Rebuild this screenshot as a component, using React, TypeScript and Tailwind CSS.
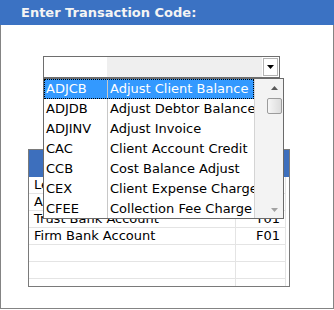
const codes = [
  { code: 'ADJCB', name: 'Adjust Client Balance' },
  { code: 'ADJDB', name: 'Adjust Debtor Balance' },
  { code: 'ADJINV', name: 'Adjust Invoice' },
  { code: 'CAC', name: 'Client Account Credit' },
  { code: 'CCB', name: 'Cost Balance Adjust' },
  { code: 'CEX', name: 'Client Expense Charge' },
  { code: 'CFEE', name: 'Collection Fee Charge' },
];

const accounts = [
  { name: 'Ledger Account', code: 'L01' },
  { name: 'Agency Account', code: 'A01' },
  { name: 'Trust Bank Account', code: 'T01' },
  { name: 'Firm Bank Account', code: 'F01' },
  { name: '', code: '' },
  { name: '', code: '' },
];

function Arrow({ up, color }: { up?: boolean; color: string }) {
  return (
    <svg width="7" height="4" viewBox="0 0 7 4">
      <path d={up ? 'M0 4 L3.5 0 L7 4 Z' : 'M0 0 L7 0 L3.5 4 Z'} fill={color} />
    </svg>
  );
}

function CodeList() {
  return (
    <div className="absolute left-0 top-[22px] z-10 flex h-[141px] w-[241px] border border-[#6a6a6a] bg-white">
      <div className="w-[210px] overflow-hidden">
        {codes.map((c, i) => (
          <div
            key={c.code}
            className={
              i === 0
                ? 'flex h-[20px] items-center bg-[#3399ff] text-white outline outline-1 -outline-offset-1 outline-dotted outline-black'
                : 'flex h-[20px] items-center text-black'
            }
          >
            <div className="flex h-full w-[64px] shrink-0 items-center border-r border-[#c8c8c8] pl-[2px]">{c.code}</div>
            <div className="whitespace-nowrap pl-[2px]">{c.name}</div>
          </div>
        ))}
      </div>
      <div className="flex flex-1 flex-col items-end border-l border-[#d4d4d4] bg-[#f3f3f3]">
        <div className="flex w-[17px] flex-1 flex-col items-center">
          <div className="flex h-[17px] w-full items-center justify-center">
            <Arrow up color="#5a5a5a" />
          </div>
          <div className="mt-[2px] h-[16px] w-[15px] rounded-[2px] border border-[#9c9c9c] bg-gradient-to-r from-[#f6f6f6] to-[#dcdcdc]" />
          <div className="flex-1" />
          <div className="flex h-[17px] w-full items-center justify-center">
            <Arrow color="#a2a2a2" />
          </div>
        </div>
      </div>
    </div>
  );
}

export default function App() {
  return (
    <div className="h-[310px] w-[334px] overflow-hidden bg-white text-[13px] text-black" style={{ fontFamily: '"DejaVu Sans", Verdana, sans-serif' }}>
      <div className="flex h-[25px] items-center bg-[#3b72c3] pl-[21px] text-[13px] font-bold text-[#f4f4f4]">
        Enter Transaction Code:
      </div>
      <div className="h-[284px] border-x border-b border-[#848484] pt-[31px]">
        <div className="relative ml-[42px] w-[237px]">
          <div className="flex h-[22px] border border-[#6e6e6e] bg-white">
            <div className="w-[63px] bg-white" />
            <div className="flex-1 bg-[#efefef]" />
            <div className="m-[1px] flex w-[15px] items-center justify-center border border-[#b4b4b4] bg-white">
              <Arrow color="#000" />
            </div>
          </div>
          <CodeList />
        </div>

        <div className="ml-[27px] mt-[71px] h-[138px] w-[262px] overflow-hidden border border-[#7a7a7a] bg-white">
          <div className="h-[27px] bg-[#3d6fbd]" />
          {accounts.map((a, i) => (
            <div key={i} className="flex h-[17px] w-[257px] border-b border-[#e4e4e4]">
              <div className="flex w-[207px] items-center whitespace-nowrap border-r border-[#e4e4e4] pl-[5px]">{a.name}</div>
              <div className="flex flex-1 items-center justify-end border-r border-[#e4e4e4] pr-[5px]">{a.code}</div>
            </div>
          ))}
          <div className="flex h-[17px] w-[257px]">
            <div className="w-[207px] border-r border-[#e4e4e4]" />
            <div className="flex-1 border-r border-[#e4e4e4]" />
          </div>
        </div>
      </div>
    </div>
  );
}
